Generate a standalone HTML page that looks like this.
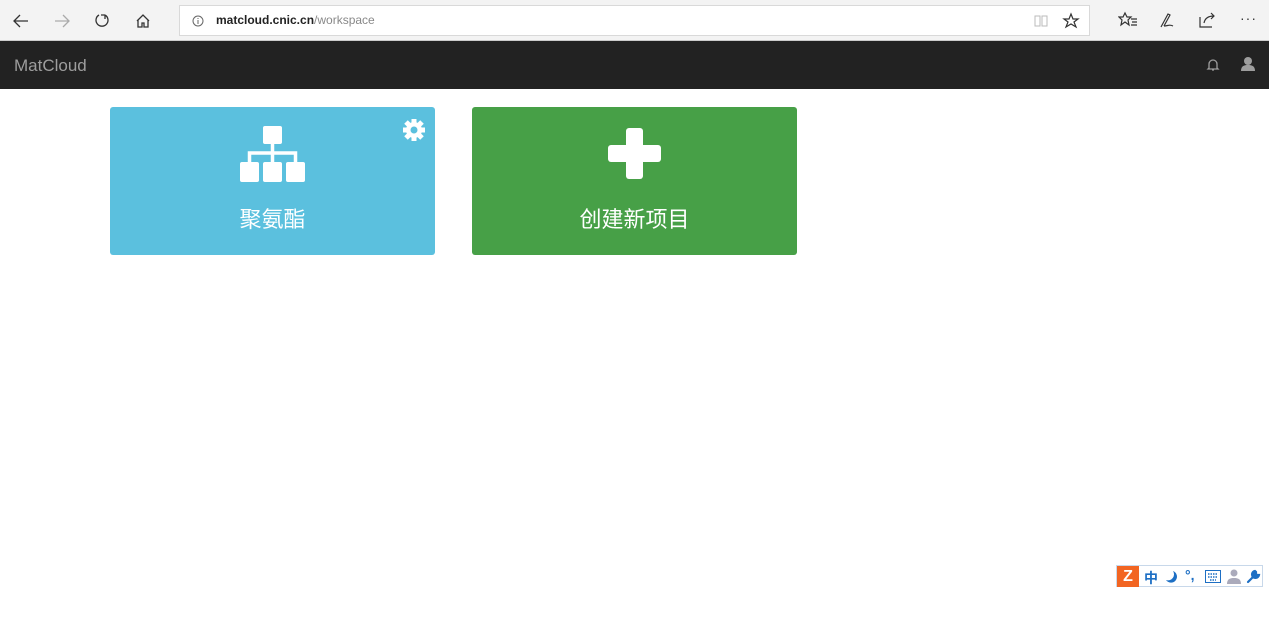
<!DOCTYPE html>
<html><head><meta charset="utf-8"><style>
*{margin:0;padding:0;box-sizing:border-box}
body{width:1269px;height:617px;overflow:hidden;background:#fff;font-family:"Liberation Sans","Noto Sans CJK SC",sans-serif;position:relative}
.chrome{position:absolute;left:0;top:0;width:1269px;height:41px;background:#f3f3f3;border-bottom:1px solid #ccc}
.url{position:absolute;left:179px;top:5px;width:911px;height:31px;background:#fff;border:1px solid #d9d9d9}
.url span{position:absolute;left:36px;top:7px;font-size:12px;color:#222;font-weight:bold}
.url span i{font-style:normal;color:#888;font-weight:normal}
.nav{position:absolute;left:0;top:41px;width:1269px;height:48px;background:#222}
.brand{position:absolute;left:14px;top:15px;font-size:17px;color:#9d9d9d}
.card{position:absolute;top:107px;width:325px;height:148px;border-radius:3px}
.c1{left:110px;background:#5bc0de}
.c2{left:472px;background:#47a047}
.t{position:absolute;left:0;width:100%;top:95px;text-align:center;color:#fff;font-size:22px}
svg{position:absolute}
</style></head><body>
<div class="chrome">
<svg style="left:12px;top:12px" width="18" height="18" viewBox="0 0 18 18"><path d="M16 9H2M8 3L2 9l6 6" fill="none" stroke="#333" stroke-width="1.3"/></svg>
<svg style="left:53px;top:12px" width="18" height="18" viewBox="0 0 18 18"><path d="M2 9h14M10 3l6 6-6 6" fill="none" stroke="#aaa" stroke-width="1.3"/></svg>
<svg style="left:93px;top:12px" width="18" height="18" viewBox="0 0 18 18"><path d="M6 3A6 6 0 1 0 12 3M12 3V7M12 3H8" fill="none" stroke="#333" stroke-width="1.3"/></svg>
<svg style="left:134px;top:12px" width="18" height="18" viewBox="0 0 18 18"><path d="M3 9L9 3l6 6M4 8v7h4v-4h2v4h4V8" fill="none" stroke="#333" stroke-width="1.3"/></svg>
<div class="url"><svg style="left:12px;top:9px" width="12" height="12" viewBox="0 0 12 12"><circle cx="6" cy="6" r="5" fill="none" stroke="#666"/><path d="M6 5v4M6 3v1" stroke="#666"/></svg><span>matcloud.cnic.cn<i>/workspace</i></span>
<svg style="left:853px;top:7px" width="16" height="16" viewBox="0 0 16 16"><path d="M2 3h5v10H2zM9 3h5v10H9z" fill="none" stroke="#bbb"/></svg>
<svg style="left:882px;top:6px" width="18" height="18" viewBox="0 0 18 18"><path d="M9 2l2 5h5l-4 3 2 5-5-3-5 3 2-5-4-3h5z" fill="none" stroke="#333" stroke-width="1.2"/></svg></div>
<svg style="left:1118px;top:11px" width="20" height="18" viewBox="0 0 20 18"><path d="M7 2l2 4h4l-3 3 1 5-4-3-4 3 1-5-3-3h4zM13 8h6M14 11h5M13 14h6" fill="none" stroke="#333" stroke-width="1.2"/></svg>
<svg style="left:1158px;top:11px" width="20" height="18" viewBox="0 0 20 18"><path d="M3 16L10 3l2 1-6 11M6 15c4 0 5-2 9 0" fill="none" stroke="#333" stroke-width="1.2"/></svg>
<svg style="left:1198px;top:11px" width="20" height="18" viewBox="0 0 20 18"><path d="M2 6v10h12M6 12c1-5 5-7 10-7M13 2l3 3-3 3" fill="none" stroke="#333" stroke-width="1.2"/></svg>
<div style="position:absolute;left:1240px;top:10px;font-size:14px;color:#333;letter-spacing:1px">···</div>
</div>
<div class="nav"><div class="brand">MatCloud</div>
<svg style="left:1206px;top:16px" width="14" height="16" viewBox="0 0 14 16"><path d="M3 11V7a4 4 0 0 1 8 0v4l1 1H2zM6 13h2" fill="none" stroke="#9d9d9d" stroke-width="1.3"/></svg>
<svg style="left:1241px;top:15px" width="14" height="16" viewBox="0 0 14 16"><circle cx="7" cy="5" r="4" fill="#9d9d9d"/><path d="M0 15c0-5 3-6 7-6s7 1 7 6z" fill="#9d9d9d"/></svg>
</div>
<div class="card c1">
<svg style="left:291px;top:10px" width="26" height="26" viewBox="0 0 26 26"><g fill="#fff"><circle cx="13" cy="13" r="8"/><g stroke="#fff" stroke-width="5"><path d="M13 2v22M2 13h22M5 5l16 16M21 5L5 21"/></g></g><circle cx="13" cy="13" r="3.5" fill="#5bc0de"/></svg>
<svg style="left:130px;top:19px" width="66" height="57" viewBox="0 0 66 57"><g fill="#fff"><rect x="23" y="0" width="19" height="18" rx="2"/><rect x="0" y="36" width="19" height="20" rx="2"/><rect x="23" y="36" width="19" height="20" rx="2"/><rect x="46" y="36" width="19" height="20" rx="2"/></g><path d="M32.5 18v18M9.5 36V27h46v9" fill="none" stroke="#fff" stroke-width="3.5"/></svg>
<div class="t">聚氨酯</div></div>
<div class="card c2">
<svg style="left:136px;top:21px" width="53" height="51" viewBox="0 0 53 51"><g fill="#fff"><rect x="18" y="0" width="17" height="51" rx="3"/><rect x="0" y="17" width="53" height="17" rx="3"/></g></svg>
<div class="t">创建新项目</div></div>
<div style="position:absolute;left:1116px;top:565px;width:147px;height:22px;border:1px solid #c8d8ea;background:#fff">
<div style="position:absolute;left:0;top:0;width:22px;height:21px;background:#f26522;color:#fff;font-weight:bold;font-size:16px;text-align:center;line-height:21px">Z</div>
<div style="position:absolute;left:27px;top:2px;font-size:14px;color:#1d6fc4;font-weight:bold">中</div>
<svg style="left:48px;top:4px" width="14" height="14" viewBox="0 0 14 14"><path d="M8 1a6 6 0 1 1-7 9 6 6 0 0 0 7-9z" fill="#1d6fc4"/></svg>
<div style="position:absolute;left:68px;top:1px;font-size:14px;color:#1d6fc4;font-weight:bold">°,</div>
<svg style="left:88px;top:4px" width="16" height="13" viewBox="0 0 16 13"><rect x="0.5" y="0.5" width="15" height="12" fill="none" stroke="#1d6fc4"/><path d="M3 4h10M3 7h10M5 10h6" stroke="#1d6fc4" stroke-width="1.5" stroke-dasharray="1.5 1"/></svg>
<svg style="left:110px;top:3px" width="14" height="15" viewBox="0 0 14 15"><circle cx="7" cy="4" r="3.5" fill="#aab"/><path d="M0 15c0-5 3-6 7-6s7 1 7 6z" fill="#aab"/></svg>
<svg style="left:129px;top:3px" width="15" height="15" viewBox="0 0 15 15"><path d="M2 13l6-6M9 2a3.5 3.5 0 1 0 4 4l-2 0-1-1 0-2z" fill="#1d6fc4" stroke="#1d6fc4" stroke-width="2.2" stroke-linecap="round"/></svg>
</div>
</body></html>
